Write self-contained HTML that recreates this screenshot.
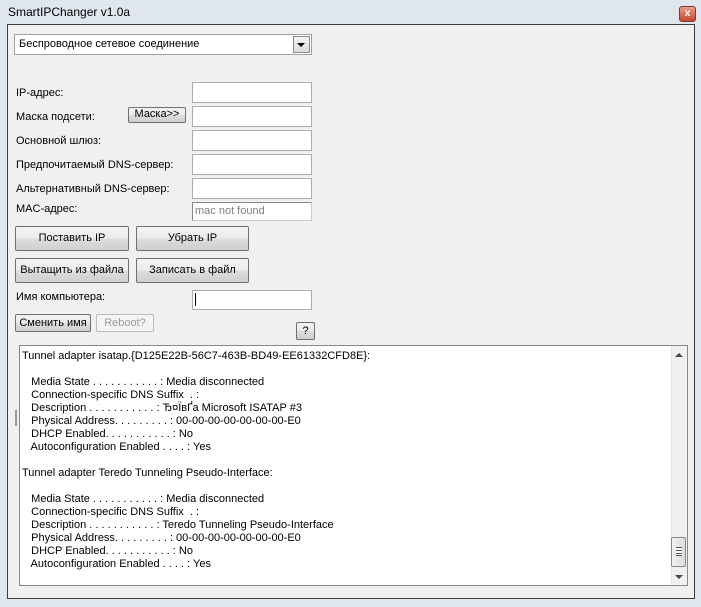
<!DOCTYPE html>
<html><head><meta charset="utf-8"><style>
*{margin:0;padding:0;box-sizing:border-box}
body{width:701px;height:607px;overflow:hidden;background:#dfe6ee;font-family:"Liberation Sans","DejaVu Sans",sans-serif;font-size:11px;color:#000;position:relative}
.a{position:absolute;white-space:nowrap}
.client{position:absolute;left:7px;top:24px;width:688px;height:575px;background:#f0f0f0;border:1px solid #3c3c3c}
.tb{position:absolute;background:#fff;border:1px solid #abadb3;border-top-color:#abadb3}
.btn{position:absolute;background:linear-gradient(#f2f2f2,#ebebeb 50%,#dddddd 51%,#cfcfcf);border:1px solid #707070;border-radius:2px;text-align:center;font-size:11px}
.lbl{position:absolute;font-size:11px;white-space:nowrap}
.mono{position:absolute;font-size:11px;white-space:pre;line-height:13px}
</style></head><body>
<div class="a" style="left:8px;top:5px;font-size:12px;color:#000">SmartIPChanger v1.0a</div>
<div class="a" style="left:679px;top:6px;width:17px;height:16px;background:linear-gradient(#e8a08a,#c6452a);border:1px solid #7a3a30;border-radius:3px;color:#fff;font-size:10px;font-weight:bold;text-align:center;line-height:14px">x</div>
<div class="client"></div>
<div class="tb" style="left:14px;top:34px;width:298px;height:21px;border-color:#a0a0a0"></div>
<div class="lbl" style="left:19px;top:38px">Беспроводное сетевое соединение</div>
<div class="a" style="left:293px;top:36px;width:17px;height:17px;background:linear-gradient(#f3f3f3,#dcdcdc);border:1px solid #8a8a8a"></div>
<div class="a" style="left:297px;top:43px;width:0;height:0;border-left:4px solid transparent;border-right:4px solid transparent;border-top:4px solid #000"></div>

<div class="lbl" style="left:16px;top:87px">IP-адрес:</div>
<div class="lbl" style="left:16px;top:111px">Маска подсети:</div>
<div class="lbl" style="left:16px;top:135px">Основной шлюз:</div>
<div class="lbl" style="left:16px;top:159px">Предпочитаемый DNS-сервер:</div>
<div class="lbl" style="left:16px;top:183px">Альтернативный DNS-сервер:</div>
<div class="lbl" style="left:16px;top:203px">MAC-адрес:</div>
<div class="tb" style="left:192px;top:82px;width:120px;height:21px"></div>
<div class="tb" style="left:192px;top:106px;width:120px;height:21px"></div>
<div class="tb" style="left:192px;top:130px;width:120px;height:21px"></div>
<div class="tb" style="left:192px;top:154px;width:120px;height:21px"></div>
<div class="tb" style="left:192px;top:178px;width:120px;height:21px"></div>
<div class="tb" style="left:192px;top:202px;width:120px;height:19px;background:#fff;border-color:#ccc;border-left-color:#888;border-top-color:#888"></div>
<div class="lbl" style="left:195px;top:205px;color:#808080">mac not found</div>
<div class="btn" style="left:128px;top:107px;width:58px;height:16px;line-height:13px">Маска&gt;&gt;</div>

<div class="btn" style="left:15px;top:226px;width:114px;height:25px;line-height:23px">Поставить IP</div>
<div class="btn" style="left:136px;top:226px;width:113px;height:25px;line-height:23px">Убрать IP</div>
<div class="btn" style="left:15px;top:258px;width:114px;height:25px;line-height:23px">Вытащить из файла</div>
<div class="btn" style="left:136px;top:258px;width:113px;height:25px;line-height:23px">Записать в файл</div>
<div class="lbl" style="left:16px;top:291px">Имя компьютера:</div>
<div class="tb" style="left:192px;top:290px;width:120px;height:20px"></div>
<div class="a" style="left:195px;top:293px;width:1px;height:13px;background:#000"></div>
<div class="btn" style="left:15px;top:314px;width:76px;height:18px;line-height:16px">Сменить имя</div>
<div class="btn" style="left:96px;top:314px;width:58px;height:18px;line-height:16px;color:#999;border-color:#bbb;background:#f4f4f4">Reboot?</div>
<div class="btn" style="left:296px;top:322px;width:19px;height:18px;line-height:16px">?</div>

<div class="tb" style="left:19px;top:345px;width:669px;height:241px;border-color:#828790"></div>
<div class="a" style="left:671px;top:346px;width:16px;height:239px;background:#f0f0f0;border-left:1px solid #e6e6e6"></div>
<div class="a" style="left:675px;top:353px;width:0;height:0;border-left:4px solid transparent;border-right:4px solid transparent;border-bottom:4px solid #444"></div>
<div class="a" style="left:675px;top:575px;width:0;height:0;border-left:4px solid transparent;border-right:4px solid transparent;border-top:4px solid #444"></div>
<div class="a" style="left:671px;top:537px;width:15px;height:30px;background:linear-gradient(90deg,#f2f2f2,#dcdcdc);border:1px solid #888;border-radius:2px"></div>
<div class="a" style="left:676px;top:547px;width:6px;height:9px;border-top:1px solid #555;border-bottom:1px solid #555;background:linear-gradient(#fff 0,#fff 2px,#555 2px,#555 3px,#fff 3px,#fff 5px,#555 5px,#555 6px,#fff 6px)"></div>
<div class="a" style="left:15px;top:410px;width:2px;height:16px;background:#999"></div>
<div class="mono" style="left:22px;top:350px">Tunnel adapter isatap.{D125E22B-56C7-463B-BD49-EE61332CFD8E}:

   Media State . . . . . . . . . . . : Media disconnected
   Connection-specific DNS Suffix  . :
   Description . . . . . . . . . . . : Ђ¤ЇвҐа Microsoft ISATAP #3
   Physical Address. . . . . . . . . : 00-00-00-00-00-00-00-E0
   DHCP Enabled. . . . . . . . . . . : No
   Autoconfiguration Enabled . . . . : Yes

Tunnel adapter Teredo Tunneling Pseudo-Interface:

   Media State . . . . . . . . . . . : Media disconnected
   Connection-specific DNS Suffix  . :
   Description . . . . . . . . . . . : Teredo Tunneling Pseudo-Interface
   Physical Address. . . . . . . . . : 00-00-00-00-00-00-00-E0
   DHCP Enabled. . . . . . . . . . . : No
   Autoconfiguration Enabled . . . . : Yes</div>
</body></html>
